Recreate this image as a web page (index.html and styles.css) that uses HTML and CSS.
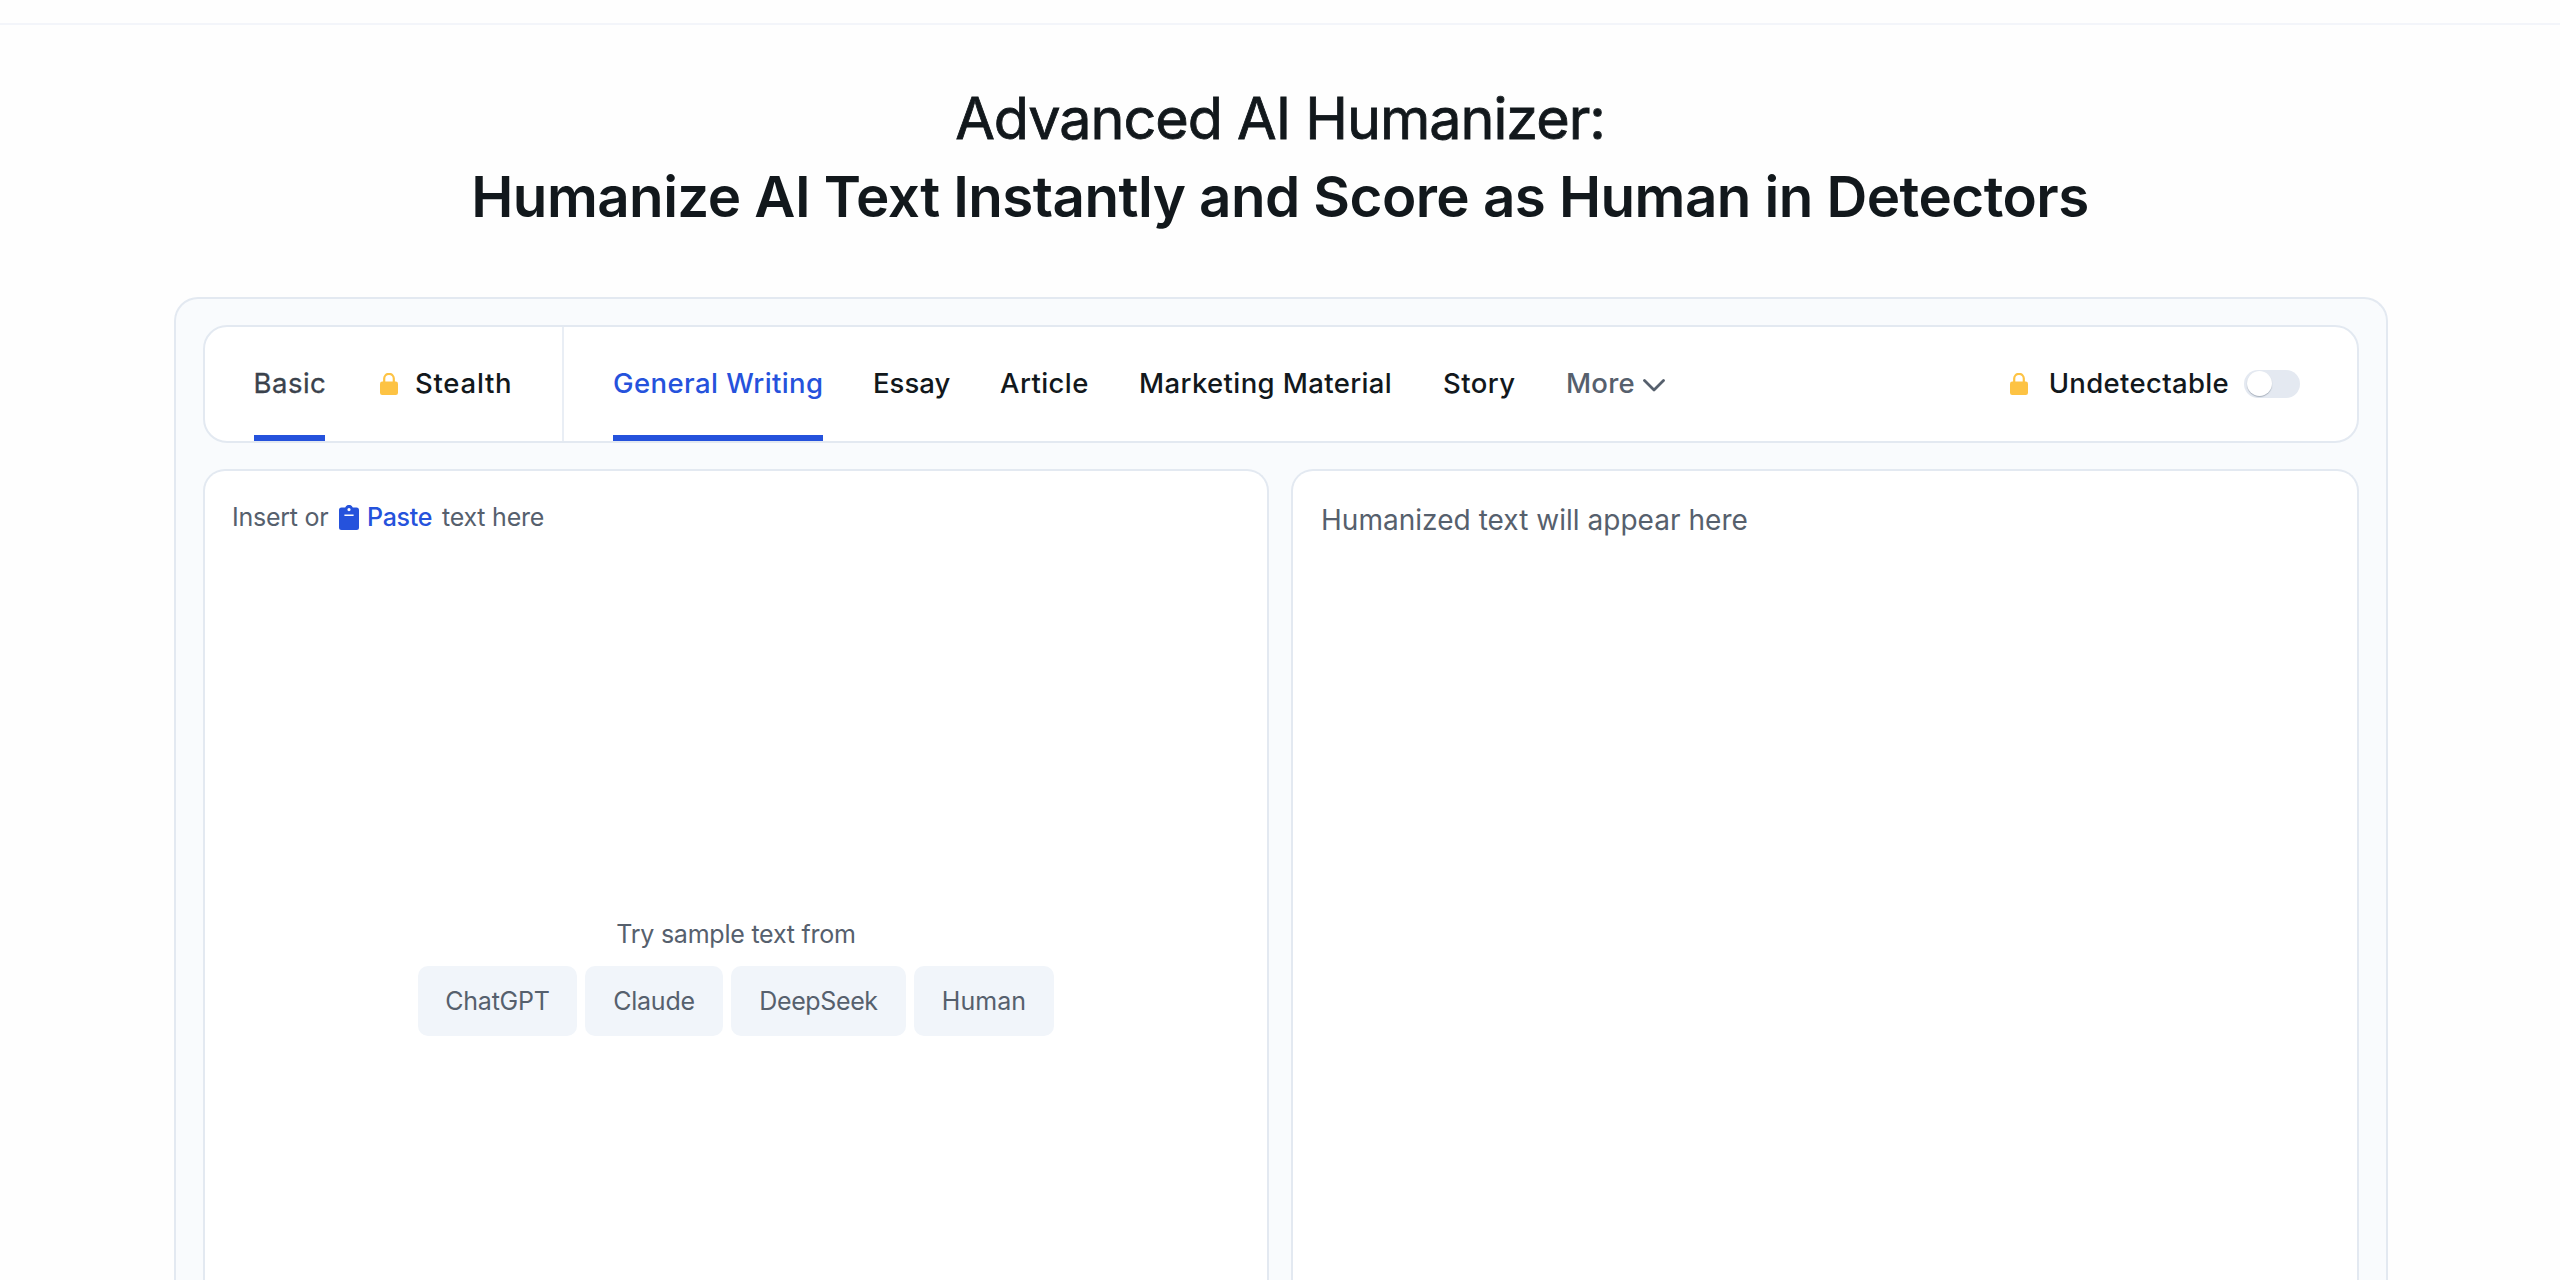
FILE: index.html
```html
<!DOCTYPE html>
<html lang="en">
<head>
<meta charset="utf-8">
<title>Advanced AI Humanizer</title>
<link rel="stylesheet" href="styles.css">
</head>
<body>
<header class="topbar"></header>
<main>
  <h1 class="title"><span class="title-light">Advanced AI Humanizer:</span><span class="title-bold">Humanize AI Text Instantly and Score as Human in Detectors</span></h1>
  <section class="panel">
    <nav class="toolbar">
      <div class="modes">
        <a class="tab tab-basic active">Basic</a>
        <a class="tab tab-stealth"><svg class="lock" viewBox="0 0 18 22"><path d="M4.2 10V5.6a4.8 4.8 0 0 1 9.6 0V10" fill="none" stroke="#fdc344" stroke-width="2.2"/><rect y="8.6" width="18" height="13.4" rx="2.2" fill="#fdc344"/></svg><span>Stealth</span></a>
      </div>
      <div class="styles">
        <a class="tab tab-general active">General Writing</a>
        <a class="tab tab-essay">Essay</a>
        <a class="tab tab-article">Article</a>
        <a class="tab tab-marketing">Marketing Material</a>
        <a class="tab tab-story">Story</a>
        <a class="tab tab-more">More<svg class="chevron" viewBox="0 0 22 13"><path d="M1.5 1.5 11 11 20.5 1.5" fill="none" stroke="#56606d" stroke-width="2.8" stroke-linecap="round" stroke-linejoin="round"/></svg></a>
      </div>
      <div class="undetectable">
        <svg class="lock" viewBox="0 0 18 22"><path d="M4.2 10V5.6a4.8 4.8 0 0 1 9.6 0V10" fill="none" stroke="#fdc344" stroke-width="2.2"/><rect y="8.6" width="18" height="13.4" rx="2.2" fill="#fdc344"/></svg>
        <span class="undetectable-label">Undetectable</span>
        <span class="toggle"><span class="knob"></span></span>
      </div>
    </nav>
    <div class="panes">
      <div class="pane">
        <div class="prompt">
          <span class="prompt-insert">Insert or</span>
          <svg class="clipboard" viewBox="0 0 20 25"><path fill="#2552dc" fill-rule="evenodd" d="M2.5 2.6H6.2A4 4 0 0 1 13.8 2.6H17.5A2.5 2.5 0 0 1 20 5.1V22.5A2.5 2.5 0 0 1 17.5 25H2.5A2.5 2.5 0 0 1 0 22.5V5.1A2.5 2.5 0 0 1 2.5 2.6ZM10 3A1.6 1.6 0 1 0 10 6.2A1.6 1.6 0 1 0 10 3ZM5.4 9.4V11.1H14.6V9.4Z"/></svg>
          <span class="prompt-paste">Paste</span>
          <span class="prompt-rest">text here</span>
        </div>
        <div class="samples">
          <p class="samples-label">Try sample text from</p>
          <div class="chips">
            <span class="chip chip-chatgpt">ChatGPT</span>
            <span class="chip chip-claude">Claude</span>
            <span class="chip chip-deepseek">DeepSeek</span>
            <span class="chip chip-human">Human</span>
          </div>
        </div>
      </div>
      <div class="pane">
        <p class="output">Humanized text will appear here</p>
      </div>
    </div>
  </section>
</main>
</body>
</html>
```
FILE: styles.css
```css
* { box-sizing: border-box; }
body {
  margin: 0;
  height: 1280px;
  overflow: hidden;
  background: #fefefe;
  color: #12181c;
  font-family: Inter, "Liberation Sans", sans-serif;
}
.topbar { height: 25px; border-bottom: 2px solid #f3f5fa; }
.title {
  margin: 54px 0 0;
  display: flex;
  flex-direction: column;
  align-items: center;
  line-height: 78px;
  white-space: nowrap;
}
.title-light { font-size: 57.5px; font-weight: 400; letter-spacing: -1.04px; -webkit-text-stroke: 0.8px currentColor; }
.title-bold { padding-top: 1px; font-size: 56.5px; font-weight: 600; letter-spacing: -0.55px; }
.panel {
  width: 2214px;
  height: 983px;
  margin: 61px 0 0 174px;
  padding: 26px 27px 0;
  border: 2px solid #e3e9f1;
  border-bottom: 0;
  border-radius: 24px 24px 0 0;
  background: #f9fbfd;
}
.toolbar {
  display: flex;
  height: 118px;
  border: 2px solid #e3e9f1;
  border-radius: 24px;
  background: #fff;
  font-size: 27.5px;
  font-weight: 500;
  white-space: nowrap;
}
.modes {
  display: flex;
  gap: 55px;
  width: 359px;
  padding-left: 49px;
  border-right: 2px solid #e9eef5;
}
.styles { display: flex; gap: 50px; padding-left: 49px; }
.tab {
  display: flex;
  align-items: center;
  height: 114px;
  padding-bottom: 2px;
  letter-spacing: 0.42px;
}
.active { padding-bottom: 0; padding-top: 4px; border-bottom: 6px solid #2552dc; }
.tab-basic { width: 71px; color: #3a424c; font-weight: 400; letter-spacing: 0.5px; text-indent: -0.5px; -webkit-text-stroke: 0.3px currentColor; }
.tab-stealth { gap: 17px; letter-spacing: 0.75px; }
.tab-general { width: 210px; color: #2552dc; }
.tab-essay { width: 77px; letter-spacing: 0.03px; }
.tab-article { width: 90px; }
.tab-marketing { width: 253px; letter-spacing: 0.38px; text-indent: -1px; }
.tab-story { width: 73px; }
.tab-more { color: #56606d; letter-spacing: 0.23px; }
.lock { width: 18px; height: 22px; margin-top: 2px; }
.chevron { width: 22px; height: 13px; margin: 5px 0 0 8px; }
.undetectable {
  display: flex;
  align-items: center;
  margin-left: auto;
  padding: 0 57px 2px 0;
}
.undetectable-label { margin: 0 15px 0 21px; letter-spacing: 0.33px; }
.toggle {
  width: 56px;
  height: 28px;
  margin-top: 2px;
  padding: 1px 3px;
  border-radius: 14px;
  background: #e4e9f1;
}
.knob {
  display: block;
  width: 25px;
  height: 25px;
  border-radius: 50%;
  background: #fff;
  box-shadow: 0 1px 1px rgba(30, 45, 65, 0.3);
}
.panes { display: grid; grid-template-columns: 1066px 1068px; gap: 22px; margin-top: 26px; }
.pane {
  height: 811px;
  border: 2px solid #e3e9f1;
  border-bottom: 0;
  border-radius: 22px 22px 0 0;
  background: #fff;
  color: #56606d;
}
.prompt {
  display: flex;
  align-items: center;
  height: 40px;
  margin: 26px 0 0 27px;
  font-size: 25px;
  letter-spacing: -0.24px;
  white-space: nowrap;
}
.prompt-insert { width: 107px; }
.clipboard { width: 20px; height: 25px; margin-right: 8px; }
.prompt-paste { width: 75px; color: #2552dc; font-weight: 500; letter-spacing: -0.3px; }
.samples {
  display: flex;
  flex-direction: column;
  align-items: center;
  margin-top: 382px;
  font-size: 25px;
  letter-spacing: -0.23px;
}
.samples-label { margin: 0; line-height: 30px; }
.chips { display: flex; gap: 8px; margin-top: 17px; }
.chip {
  display: flex;
  align-items: center;
  justify-content: center;
  height: 70px;
  border-radius: 10px;
  background: #f1f5fa;
}
.chip-chatgpt { width: 159px; }
.chip-claude { width: 138px; }
.chip-deepseek { width: 175px; letter-spacing: -0.38px; }
.chip-human { width: 140px; letter-spacing: 0.05px; }
.output { margin: 29px 0 0 28px; font-size: 28px; line-height: 40px; letter-spacing: 0.03px; }
```
